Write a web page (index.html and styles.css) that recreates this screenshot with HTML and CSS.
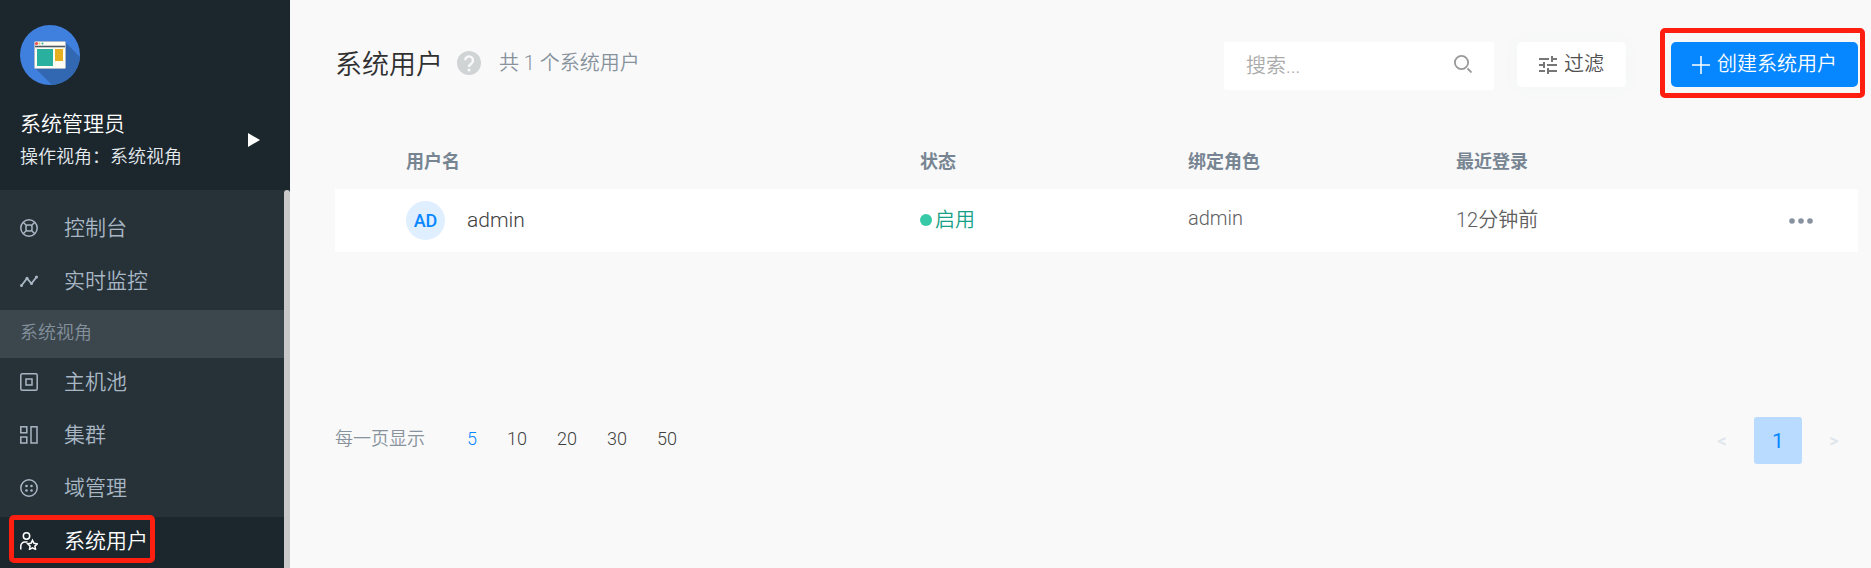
FILE: index.html
```html
<!DOCTYPE html>
<html lang="zh-CN">
<head>
    <meta charset="UTF-8">
    <meta name="viewport" content="width=device-width, initial-scale=1.0">
    <title>系统用户</title>
    <link rel="stylesheet" href="styles.css">
</head>
<body>
    <div class="app">
        <aside class="sidebar">
            <div class="sidebar-header">
                <svg class="logo" viewBox="0 0 60 60">
                    <defs>
                        <clipPath id="logoClip"><circle cx="30" cy="30" r="30"/></clipPath>
                    </defs>
                    <circle cx="30" cy="30" r="30" fill="#3f80df"/>
                    <path d="M45 17l20 20v28H37L15 43z" fill="#3267b2" clip-path="url(#logoClip)"/>
                    <rect x="14.500" y="16.500" width="31" height="27" rx="1" fill="#fffdf3" stroke="#a9b9cb"/>
                    <path d="M15 21.500h30" stroke="#4c5a68" stroke-width="1.600"/>
                    <circle cx="16.500" cy="18.500" r="1.600" fill="#f04e4e"/>
                    <circle cx="19.500" cy="18.500" r="1" fill="#e8c25a"/>
                    <circle cx="22.500" cy="18.500" r="1" fill="#2baf9f"/>
                    <rect x="17" y="24" width="16" height="17" fill="#29b09f"/>
                    <rect x="35" y="24" width="8" height="12" fill="#e8b020"/>
                </svg>
                <button class="account">
                    <span class="account-text">
                        <span class="account-name">系统管理员</span>
                        <span class="account-view">操作视角：系统视角</span>
                    </span>
                    <svg class="arrow" viewBox="0 0 12 14"><path d="M0 0l12 7-12 7z" fill="#fff"/></svg>
                </button>
            </div>
            <div class="sidebar-body">
                <nav class="menu">
                    <a class="menu-item" href="#">
                        <svg class="icon" viewBox="0 0 18 18"><circle cx="9" cy="9" r="8.200"/><rect x="6" y="6" width="6" height="6" rx="2"/><path d="M3.200 3.200l3.300 3.300M14.800 3.200l-3.300 3.300M3.200 14.800l3.300-3.300M14.800 14.800l-3.300-3.300"/></svg>
                        <span class="label">控制台</span>
                    </a>
                    <a class="menu-item" href="#">
                        <svg class="icon" viewBox="0 0 18 18"><path d="M1.500 13.500l5.500-7 4.500 5 5-6.500" stroke-width="1.800"/><g class="fill"><circle cx="1.500" cy="13.500" r="1.500"/><circle cx="7" cy="6.300" r="1.500"/><circle cx="11.500" cy="11.500" r="1.500"/><circle cx="16.500" cy="5" r="1.500"/></g></svg>
                        <span class="label">实时监控</span>
                    </a>
                    <div class="menu-title">系统视角</div>
                    <a class="menu-item" href="#">
                        <svg class="icon" viewBox="0 0 18 18"><rect x=".8" y=".8" width="16.400" height="16.400" rx="1.500"/><rect x="6" y="6" width="6" height="6"/></svg>
                        <span class="label">主机池</span>
                    </a>
                    <a class="menu-item" href="#">
                        <svg class="icon" viewBox="0 0 18 18"><rect x=".8" y=".8" width="6" height="6"/><rect x=".8" y="11" width="6" height="6"/><rect x="11" y=".8" width="6" height="16.200"/></svg>
                        <span class="label">集群</span>
                    </a>
                    <a class="menu-item" href="#">
                        <svg class="icon" viewBox="0 0 18 18"><circle cx="9" cy="9" r="8.200"/><g class="fill"><circle cx="6.500" cy="7" r="1.300"/><circle cx="11.500" cy="7" r="1.300"/><circle cx="6.500" cy="11.500" r="1.300"/><circle cx="11.500" cy="11.500" r="1.300"/></g></svg>
                        <span class="label">域管理</span>
                    </a>
                    <a class="menu-item active" href="#">
                        <svg class="icon" viewBox="0 0 18 18"><circle cx="6.500" cy="4" r="3.200"/><path d="M.8 17.500v-3.500a4 4 0 0 1 4-4h2.700M12.500 8.300l1.500 3 3.300.5-2.400 2.300.6 3.300-3-1.600-3 1.600.6-3.300-2.400-2.300 3.300-.5z"/></svg>
                        <span class="label">系统用户</span>
                        <span class="mark"></span>
                    </a>
                </nav>
                <div class="scrollbar"></div>
            </div>
        </aside>

        <main class="content">
            <header class="toolbar">
                <h1>系统用户</h1>
                <svg class="help" viewBox="0 0 24 24"><circle cx="12" cy="12" r="12" fill="#d0d4d5"/><path d="M8.200 9.300a3.900 3.900 0 1 1 6.400 3c-1.500 1.200-2.600 1.800-2.600 3.600" fill="none" stroke="#f9f9f9" stroke-width="2.400"/><circle cx="12" cy="19" r="1.500" fill="#f9f9f9"/></svg>
                <span class="total">共 1 个系统用户</span>
                <div class="actions">
                    <div class="search">
                        <input type="text" placeholder="搜索..." aria-label="搜索">
                        <svg class="search-icon" viewBox="0 0 18 18"><circle cx="7.500" cy="7.500" r="6.600"/><path d="M13.500 13.500l4 4"/></svg>
                    </div>
                    <button class="btn">
                        <svg class="icon filter-icon" viewBox="0 0 18 18"><path d="M0 3h10M12 3h6M13 0v6M0 9h4M8 9h10M5 6v6M0 15h6M8 15h10M9 12v6"/></svg>
                        <span class="label">过滤</span>
                    </button>
                    <button class="btn primary">
                        <svg class="icon" viewBox="0 0 18 18"><path d="M9 0v18M0 9h18"/></svg>
                        <span class="label">创建系统用户</span>
                        <span class="mark"></span>
                    </button>
                </div>
            </header>

            <table class="users">
                <thead>
                    <tr>
                        <th class="col-name">用户名</th>
                        <th class="col-status">状态</th>
                        <th class="col-role">绑定角色</th>
                        <th class="col-login">最近登录</th>
                        <th class="col-more"></th>
                    </tr>
                </thead>
                <tbody>
                    <tr>
                        <td class="col-name"><div class="user"><span class="avatar">AD</span><span class="user-name">admin</span></div></td>
                        <td><div class="status"><span class="dot"></span>启用</div></td>
                        <td>admin</td>
                        <td>12分钟前</td>
                        <td class="col-more">
                            <button class="more" aria-label="更多"><svg viewBox="0 0 24 6"><circle cx="3" cy="3" r="2.800"/><circle cx="12" cy="3" r="2.800"/><circle cx="21" cy="3" r="2.800"/></svg></button>
                        </td>
                    </tr>
                </tbody>
            </table>

            <footer class="pager">
                <div class="page-size">
                    <span class="page-label">每一页显示</span>
                    <a class="current" href="#">5</a>
                    <a href="#">10</a>
                    <a href="#">20</a>
                    <a href="#">30</a>
                    <a href="#">50</a>
                </div>
                <div class="pages">
                    <button disabled>&lt;</button>
                    <button class="current">1</button>
                    <button disabled>&gt;</button>
                </div>
            </footer>
        </main>
    </div>
</body>
</html>
```
FILE: styles.css
```css
* {
    box-sizing: border-box;
}

body {
    margin: 0;
    background-color: #f9f9f9;
    font-family: Roboto, "Noto Sans CJK SC", sans-serif;
    font-size: 20px;
    font-weight: 350;
    color: #404040;
}

button, input {
    font: inherit;
    border: none;
    margin: 0;
    padding: 0;
    background: none;
}

button {
    cursor: pointer;
}

a {
    color: inherit;
    text-decoration: none;
}

.app {
    display: flex;
    height: 100vh;
    overflow: hidden;
}

/* Sidebar */
.sidebar {
    flex: 0 0 290px;
    display: flex;
    flex-direction: column;
    background-color: #263238;
}

.sidebar-header {
    height: 190px;
    padding: 25px 30px 0 20px;
    background-color: #1c272d;
}

.logo {
    display: block;
    width: 60px;
    height: 60px;
}

.account {
    display: flex;
    align-items: center;
    justify-content: space-between;
    width: 100%;
    margin-top: 22px;
    text-align: left;
    color: #fff;
}

.account-name {
    display: block;
    font-size: 21px;
    line-height: 34px;
}

.account-view {
    display: block;
    font-size: 18px;
    line-height: 32px;
    color: #e4eaee;
}

.arrow {
    width: 12px;
    height: 14px;
}

.sidebar-body {
    flex: 1;
    display: flex;
    min-height: 0;
}

.menu {
    flex: 1;
    padding-top: 14px;
    overflow: hidden;
}

.menu-item {
    position: relative;
    display: flex;
    align-items: center;
    gap: 26px;
    height: 53px;
    padding: 0 20px 5px;
    font-size: 21px;
    color: #a9b7c4;
}

.menu-item.active {
    background-color: #1c272d;
    color: #fff;
}

.menu-title {
    height: 48px;
    padding: 0 20px;
    font-size: 18px;
    line-height: 46px;
    background-color: #3c474d;
    color: #84919d;
}

.scrollbar {
    width: 6px;
    border-radius: 3px 3px 0 0;
    background-color: #c9c9c9;
}

.icon {
    width: 18px;
    height: 18px;
    fill: none;
    stroke: currentColor;
    stroke-width: 1.5;
}

.icon .fill {
    fill: currentColor;
    stroke: none;
}

.label {
    padding-bottom: 4px;
}

/* Red frame around the highlighted controls */
.mark {
    position: absolute;
    border: 5px solid #ff1f10;
    border-radius: 5px;
    pointer-events: none;
}

.menu-item .mark {
    top: -2px;
    left: 9px;
    width: 146px;
    height: 48px;
}

.btn .mark {
    top: -14px;
    right: -7px;
    bottom: -11px;
    left: -11px;
}

/* Content */
.content {
    flex: 1;
    padding: 42px 13px 0 45px;
}

.toolbar {
    display: flex;
    align-items: flex-start;
    height: 89px;
}

h1 {
    margin: 0;
    font-size: 27px;
    font-weight: 350;
    line-height: 46px;
    color: #303030;
}

.help {
    width: 24px;
    height: 24px;
    margin: 9px 18px 0 14px;
}

.total {
    line-height: 42px;
    color: #87929d;
}

.actions {
    display: flex;
    align-items: flex-start;
    margin-left: auto;
}

.search {
    display: flex;
    align-items: center;
    width: 270px;
    height: 48px;
    margin-right: 23px;
    padding: 0 22px;
    border-radius: 3px;
    background-color: #fff;
}

.search input {
    flex: 1;
    min-width: 0;
    outline: none;
}

.search input::placeholder {
    color: #aaa;
}

.search-icon {
    width: 18px;
    height: 18px;
    margin-bottom: 4px;
    fill: none;
    stroke: #999;
    stroke-width: 1.8;
}

.btn {
    position: relative;
    display: flex;
    align-items: center;
    gap: 7px;
    height: 45px;
    padding: 0 22px;
    border-radius: 5px;
    background-color: #fff;
    box-shadow: 0 0 20px rgba(80, 120, 160, 0.03);
    color: #505050;
}

.btn.primary {
    margin-left: 45px;
    padding: 0 21px;
    background-color: #0787ff;
    color: #fff;
}

.filter-icon {
    stroke: #777;
    stroke-width: 2;
}

/* Users table */
.users {
    width: 100%;
    table-layout: fixed;
    border-collapse: collapse;
    text-align: left;
}

.users th {
    height: 58px;
    padding: 0;
    font-size: 18px;
    font-weight: 700;
    color: #778593;
}

.users td {
    height: 63px;
    padding: 0 0 5px;
    background-color: #fff;
    color: #606060;
}

.users .col-name {
    padding: 0 0 0 71px;
}

.col-status, .col-role, .col-login {
    width: 268px;
}

.users .col-more {
    width: 134px;
    padding: 0;
}

.user {
    display: flex;
    align-items: center;
    gap: 22px;
    font-size: 21px;
    color: #404040;
}

.user-name {
    padding-bottom: 2px;
}

.avatar {
    width: 39px;
    height: 39px;
    border-radius: 50%;
    background-color: #e0efff;
    font-size: 18px;
    font-weight: 500;
    line-height: 39px;
    text-align: center;
    color: #0787ff;
}

.status {
    display: flex;
    align-items: center;
    gap: 3px;
    color: #16a085;
}

.dot {
    width: 12px;
    height: 12px;
    margin-top: 4px;
    border-radius: 50%;
    background-color: #36c9a7;
}

.more {
    display: block;
    margin: 0 45px 0 auto;
}

.more svg {
    display: block;
    width: 24px;
    height: 6px;
    fill: #8792a1;
}

/* Pagination */
.pager {
    display: flex;
    align-items: center;
    justify-content: space-between;
    margin-top: 165px;
}

.page-size {
    display: flex;
    gap: 30px;
    padding-bottom: 4px;
    font-size: 18px;
    line-height: 24px;
}

.page-label {
    margin-right: 12px;
    color: #87929d;
}

.page-size .current {
    color: #0787ff;
}

.pages {
    display: flex;
    gap: 8px;
}

.pages button {
    width: 48px;
    height: 47px;
    border-radius: 3px;
    font-size: 18px;
    font-weight: 500;
    color: #dfe5ec;
}

.pages .current {
    background-color: #b8dbff;
    font-size: 21px;
    font-weight: 400;
    color: #0787ff;
}
```
